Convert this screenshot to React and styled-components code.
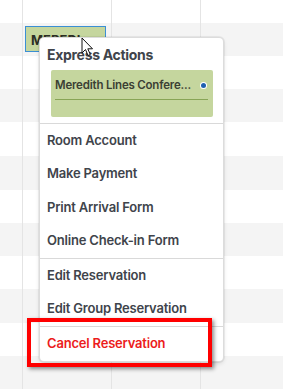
import React from 'react';
import styled, { createGlobalStyle } from 'styled-components';

const GlobalStyle = createGlobalStyle`
  html, body {
    margin: 0;
    padding: 0;
    background: #fff;
    overflow: hidden;
  }
  * { box-sizing: border-box; }
`;

const rowHeights = [23, 33, 33, 33, 34, 34, 33, 33, 33, 34, 33, 33];

const menuGroups = [
  ['Room Account', 'Make Payment', 'Print Arrival Form', 'Online Check-in Form'],
  ['Edit Reservation', 'Edit Group Reservation'],
];

const Page = styled.div`
  position: relative;
  width: 283px;
  height: 389px;
  overflow: hidden;
  font-family: Inter, 'Liberation Sans', sans-serif;
`;

const Row = styled.div`
  display: grid;
  grid-template-columns: 22px 89px 89px 1fr;
  height: ${(p) => p.$h}px;
  background: ${(p) => (p.$shade ? '#f4f4f4' : '#ffffff')};
`;

const Cell = styled.div`
  border-left: 1px solid #e4e4e4;
  &:first-child { border-left: none; }
`;

const Booking = styled.div`
  position: absolute;
  left: 25px;
  top: 26px;
  width: 81px;
  height: 26px;
  background: #c5d69e;
  border: 1px solid #3b8fd4;
  padding: 5px 0 0 5px;
  font-size: 13px;
  font-weight: 700;
  color: #2c2f26;
  overflow: hidden;
  white-space: nowrap;
`;

const Menu = styled.div`
  position: absolute;
  left: 40px;
  top: 38px;
  width: 183px;
  background: #fff;
  border-radius: 4px;
  box-shadow: 0 0 0 1px #dcdcdc, 0 0 0 2px rgba(0, 0, 0, 0.05), 0 2px 5px rgba(0, 0, 0, 0.15);
  color: #40444b;
`;

const Header = styled.div`
  padding: 8px 0 0 7px;
  height: 32px;
  font-size: 14px;
  font-weight: 700;
  letter-spacing: -0.3px;
`;

const Card = styled.div`
  margin: 0 10px 6px 11px;
  height: 47px;
  background: #c5d69e;
  border-radius: 2px;
  padding: 8px 5px 0 4px;
`;

const CardTitle = styled.div`
  display: flex;
  align-items: center;
  justify-content: space-between;
  font-size: 11.5px;
  font-weight: 600;
  letter-spacing: -0.2px;
  white-space: nowrap;
  color: #3b4034;
  padding-bottom: 7px;
  border-bottom: 1px solid #88a556;
`;

const Dot = styled.span`
  width: 5px;
  height: 5px;
  border-radius: 50%;
  background: #1f5fb0;
  box-shadow: 0 0 0 1px #fff;
  margin-right: 2px;
`;

const Group = styled.div`
  border-top: 1px solid #d9d9d9;
`;

const Item = styled.div`
  height: ${(p) => p.$h || 33.5}px;
  display: flex;
  align-items: center;
  padding: 0 0 2px 7px;
  font-size: 13px;
  font-weight: 600;
  letter-spacing: -0.2px;
  color: ${(p) => (p.$danger ? '#ec1c1c' : '#40444b')};
`;

const Highlight = styled.div`
  position: absolute;
  left: 27px;
  top: 318px;
  width: 185px;
  height: 49px;
  border: 4px solid #ff0000;
  box-shadow: 2px 2px 4px rgba(0, 0, 0, 0.45);
`;

const Cursor = styled.svg`
  position: absolute;
  left: 81px;
  top: 37px;
`;

export default function App() {
  let shade = false;
  return (
    <Page>
      <GlobalStyle />
      {rowHeights.map((h, i) => {
        const r = (
          <Row key={i} $h={h} $shade={shade}>
            <Cell />
            <Cell />
            <Cell />
            <Cell />
          </Row>
        );
        shade = !shade;
        return r;
      })}

      <Booking>MEREDI</Booking>

      <Menu>
        <Header>Express Actions</Header>
        <Card>
          <CardTitle>
            <span>Meredith Lines Confere...</span>
            <Dot />
          </CardTitle>
        </Card>
        {menuGroups.map((g, gi) => (
          <Group key={gi}>
            {g.map((label) => (
              <Item key={label}>{label}</Item>
            ))}
          </Group>
        ))}
        <Group>
          <Item $danger $h={34}>Cancel Reservation</Item>
        </Group>
      </Menu>

      <Cursor width="14" height="21" viewBox="0 0 14 21">
        <path
          d="M1 1 L1 16 L4.5 12.5 L7 18.5 L9.3 17.5 L6.8 11.8 L11.5 11.8 Z"
          fill="#fff"
          stroke="#111"
          strokeWidth="1"
          strokeLinejoin="round"
        />
      </Cursor>

      <Highlight />
    </Page>
  );
}
